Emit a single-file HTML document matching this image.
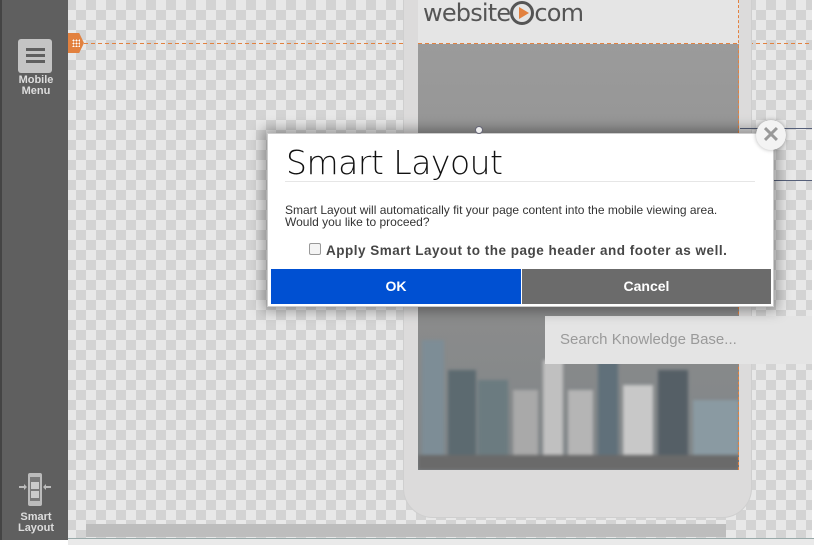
<!DOCTYPE html>
<html><head><style>
*{margin:0;padding:0;box-sizing:border-box}
body{width:814px;height:545px;overflow:hidden;position:relative;background:#fff;font-family:"Liberation Sans",sans-serif}
.chk{position:absolute;left:68px;top:0;width:744px;height:540px;background-color:#e8e8e8;background-image:conic-gradient(#d3d3d3 25%,transparent 0 50%,#d3d3d3 0 75%,transparent 0);background-size:20px 20px;background-position:8px 0}
.side{position:absolute;left:0;top:0;width:68px;height:540px;background:#5f5f5f;border-left:2px solid #444}
.lbl{position:absolute;left:0;width:68px;text-align:center;color:#ddd;font-size:11px;font-weight:bold;line-height:11px}
.phone{position:absolute;left:403px;top:-20px;width:349px;height:538px;background:#dcdbdb;border-radius:0 0 30px 30px;border:1px solid #cfcfcf}
.screen{position:absolute;left:418px;top:0;width:321px;height:470px;background:#939393;overflow:hidden}
.dash{position:absolute;height:1px;background:repeating-linear-gradient(90deg,#e2813f 0 4px,transparent 4px 7px)}
</style></head><body>
<div class="chk"></div>
<div class="side">
  <div style="position:absolute;left:16px;top:39px;width:34px;height:34px;background:#c4c4c4;border-radius:3px"></div>
  <div style="position:absolute;left:24px;top:48px;width:19px;height:3px;background:#5f5f5f;box-shadow:0 6px 0 #5f5f5f,0 12px 0 #5f5f5f"></div>
  <div class="lbl" style="top:75px">Mobile<br>Menu</div>
  <svg style="position:absolute;left:15px;top:472px" width="36" height="38" viewBox="0 0 36 38"><rect x="11" y="1" width="14" height="33" rx="2" fill="#bbb"/><rect x="13" y="5" width="10" height="24" fill="#7a7a7a"/><rect x="14" y="10" width="8" height="7" fill="#ccc"/><rect x="14" y="19" width="8" height="7" fill="#ccc"/><path d="M2 15h7M27 15h7" stroke="#bbb" stroke-width="2"/><path d="M7 12l3 3-3 3M29 12l-3 3 3 3" fill="#bbb"/></svg>
  <div class="lbl" style="top:512px">Smart<br>Layout</div>
</div>
<div style="position:absolute;left:68px;top:33px;width:16px;height:20px;background:#e2813f;clip-path:polygon(0 0,70% 0,100% 50%,70% 100%,0 100%)"></div>
<div style="position:absolute;left:72px;top:39px;width:8px;height:8px;background:radial-gradient(circle,#fff 40%,transparent 41%);background-size:3px 3px"></div>
<div class="dash" style="left:84px;top:43px;width:728px"></div>
<div class="phone"></div>
<div class="screen">
  <div style="position:absolute;left:0;top:0;width:321px;height:44px;background:#e5e5e5"></div>
  <div class="dash" style="left:0;top:43px;width:321px"></div>
  <div style="position:absolute;left:5px;top:-1px;font-family:'DejaVu Sans',sans-serif;font-size:24px;color:#555;letter-spacing:-0.8px">website<span style="display:inline-block;width:24px;height:24px;border:3px solid #555;border-radius:50%;vertical-align:-4px;position:relative"><span style="position:absolute;left:6px;top:3px;border-left:10px solid #e2813f;border-top:6px solid transparent;border-bottom:6px solid transparent"></span></span>com</div>
  <div style="position:absolute;left:0;top:44px;width:321px;height:426px;background:linear-gradient(#9b9b9b,#8c8c8c 60%,#7f8588)"></div>
  <svg style="position:absolute;left:0;top:330px;filter:blur(1.5px)" width="321" height="140"><g fill="#5c6a70"><rect x="4" y="10" width="22" height="130" fill="#7d8d96"/><rect x="30" y="40" width="28" height="100"/><rect x="60" y="50" width="30" height="90" fill="#6b7b80"/><rect x="95" y="60" width="25" height="80" fill="#a9a9a9"/><rect x="125" y="30" width="20" height="110" fill="#c0c0c0"/><rect x="150" y="60" width="25" height="80" fill="#b5b5b5"/><rect x="180" y="20" width="20" height="120" fill="#60707a"/><rect x="205" y="55" width="30" height="85" fill="#c8c8c8"/><rect x="240" y="40" width="30" height="100" fill="#555f66"/><rect x="275" y="70" width="46" height="70" fill="#8a9aa2"/></g><rect y="125" width="321" height="15" fill="#6a6a6a"/></svg>
  <div style="position:absolute;left:0;top:0;width:321px;height:470px;border-right:1px dashed #e2813f"></div>
</div>
<div style="position:absolute;left:545px;top:316px;width:267px;height:48px;background:#e4e4e4;color:#9a9a9a;font-size:15px;line-height:48px;padding-left:15px">Search Knowledge Base...</div>
<div style="position:absolute;left:740px;top:128px;width:72px;border-top:1px solid #56607a"></div>
<div style="position:absolute;left:740px;top:180px;width:72px;border-top:1px solid #56607a"></div>
<div style="position:absolute;left:86px;top:524px;width:640px;height:13px;background:#bdbdbd"></div>
<div style="position:absolute;left:68px;top:538px;width:746px;height:7px;background:#eaeaea;border-top:1px solid #9aa"></div>
<div style="position:absolute;left:267px;top:133px;width:507px;height:174px;background:#fff;box-shadow:0 0 12px 4px rgba(0,0,0,.35);border:1px solid #ccc"></div>
<div style="position:absolute;left:475px;top:126px;width:8px;height:8px;border:1px solid #667;border-radius:50%;background:#eee"></div>
<div style="position:absolute;left:756px;top:120px;width:30px;height:30px;border-radius:50%;background:#f3f3f3;box-shadow:0 0 4px rgba(0,0,0,.3);color:#999;font-size:22px;font-weight:bold;text-align:center;line-height:30px">✕</div>
<div style="position:absolute;left:286px;top:143px;font-family:'DejaVu Sans','Liberation Sans',sans-serif;font-weight:200;font-size:33px;color:#111;letter-spacing:-0.5px">Smart Layout</div>
<div style="position:absolute;left:285px;top:181px;width:470px;border-top:1px solid #e6e6e6"></div>
<div style="position:absolute;left:285px;top:204px;font-size:12px;color:#333;line-height:12px">Smart Layout will automatically fit your page content into the mobile viewing area.<br>Would you like to proceed?</div>
<div style="position:absolute;left:309px;top:243px;width:12px;height:12px;border:1px solid #999;border-radius:2px;background:#f4f4f4"></div>
<div style="position:absolute;left:326px;top:243px;font-size:13.5px;color:#333;letter-spacing:0.5px;font-weight:bold;-webkit-text-stroke:0;opacity:.9">Apply Smart Layout to the page header and footer as well.</div>
<div style="position:absolute;left:271px;top:269px;width:250px;height:35px;background:#0050d2;color:#fff;font-weight:bold;font-size:14px;text-align:center;line-height:35px">OK</div>
<div style="position:absolute;left:522px;top:269px;width:249px;height:35px;background:#6b6b6b;color:#fff;font-weight:bold;font-size:14px;text-align:center;line-height:35px">Cancel</div>
</body></html>
